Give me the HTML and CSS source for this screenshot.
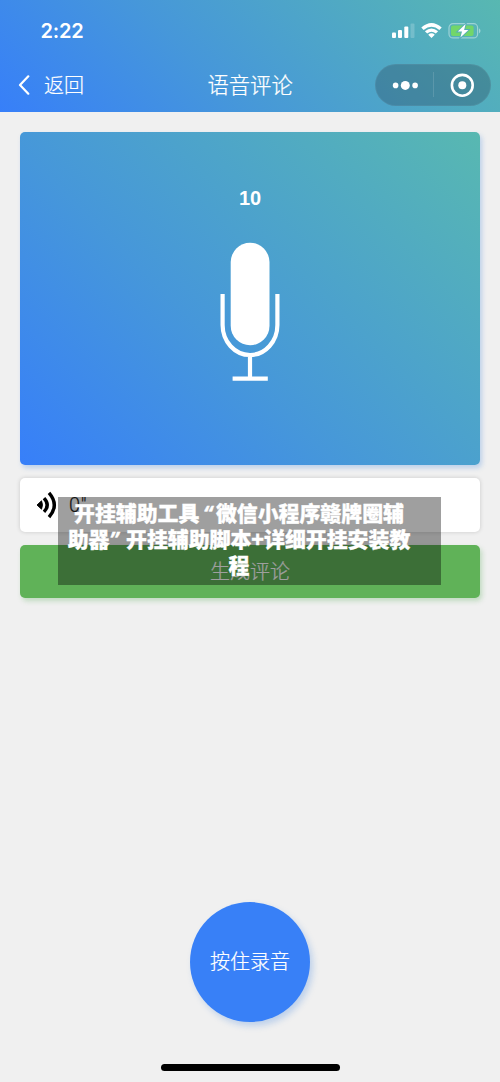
FILE: index.html
```
<!DOCTYPE html>
<html lang="zh-CN">
<head>
<meta charset="utf-8">
<title>语音评论</title>
<link rel="stylesheet" href="styles.css">
</head>
<body>
<div class="screen">
  <header class="header">
    <div class="status">
      <span class="time">2:22</span>
      <svg class="status-icons" width="92" height="18" viewBox="0 0 92 18">
        <g fill="#fff">
          <rect x="2" y="10.4" width="4" height="5.6" rx="1"/>
          <rect x="8" y="8" width="4" height="8" rx="1"/>
          <rect x="14.3" y="4.6" width="4" height="11.4" rx="1"/>
          <rect x="20.5" y="1.6" width="4" height="14.4" rx="1" opacity=".2"/>
          <path d="M31.3 5.6Q41.5-3.4 51.7 5.6L49.4 8Q41.5 1.4 33.6 8ZM34.9 9.3Q41.5 3.5 48.1 9.3L45.8 11.6Q41.5 7.8 37.2 11.6ZM38.2 12.7Q41.5 10 44.8 12.7L41.5 16Z"/>
        </g>
        <rect x="59" y="1.7" width="28.6" height="14.2" rx="4" fill="none" stroke="#fff" stroke-opacity=".42" stroke-width="1.2"/>
        <rect x="61" y="3.6" width="22.6" height="10.4" rx="2" fill="#72d66a"/>
        <path d="M89 6.2Q92 8.8 89 11.4Z" fill="#fff" opacity=".45"/>
        <path d="M75.6 2.1L67.8 9.5H72L70.4 15.6L78.4 7.9H74.1Z" fill="#fff" stroke="#55adb8" stroke-width="1.8" paint-order="stroke"/>
      </svg>
    </div>
    <nav class="navbar">
      <div class="back">
        <svg width="12" height="20" viewBox="0 0 12 20"><path d="M10.3 1.3L2 10L10.3 18.7" fill="none" stroke="#fff" stroke-width="2.2" stroke-linecap="round" stroke-linejoin="round"/></svg>
        <span class="back-label">返回</span>
      </div>
      <h1 class="title">语音评论</h1>
      <div class="capsule">
        <svg width="116" height="42" viewBox="0 0 116 42">
          <g fill="#fff">
            <circle cx="20.6" cy="21.4" r="2.8"/><circle cx="30.3" cy="21.4" r="4.5"/><circle cx="40.1" cy="21.4" r="2.8"/>
            <rect x="58" y="8" width="1" height="25" opacity=".13"/>
            <circle cx="87.3" cy="21.3" r="4"/>
          </g>
          <circle cx="87.3" cy="21.3" r="10.4" fill="none" stroke="#fff" stroke-width="2.6"/>
        </svg>
      </div>
    </nav>
  </header>
  <main class="content">
    <section class="recorder">
      <div class="count">10</div>
      <svg class="mic" width="60" height="140" viewBox="0 0 60 140">
        <rect x="10.7" y=".7" width="38.8" height="102.5" rx="19.4" fill="#fff"/>
        <path d="M2.6 52V83A27.4 30 0 0 0 57.4 83V52M30 113V136M12.6 136.7H47.8" fill="none" stroke="#fff" stroke-width="4.2"/>
      </svg>
    </section>
    <section class="voice">
      <svg width="22" height="28" viewBox="0 0 22 28">
        <path d="M1 14L5.5 9.8Q7.4 14 5.5 18.2Z" stroke="#000" stroke-width=".9"/>
        <path d="M8 7.2Q14.4 14 8 20.8M13 1.8Q23.6 14 13 26.2" fill="none" stroke="#000" stroke-width="3.4"/>
      </svg>
      <span class="duration">0"</span>
    </section>
    <div class="generate">生成评论</div>
    <div class="caption">
      <div>开挂辅助工具<span class="quote">“</span>微信小程序赣牌圈辅</div>
      <div>助器<span class="quote close">”</span>开挂辅助脚本+详细开挂安装教</div>
      <div>程</div>
    </div>
  </main>
  <footer class="footer">
    <div class="record">按住录音</div>
    <div class="home"></div>
  </footer>
</div>
</body>
</html>
```
FILE: styles.css
```
* { box-sizing: border-box; }
body {
  margin: 0;
  background: #f0f0f0;
  font-family: "Noto Sans CJK SC", sans-serif;
  font-weight: 300;
}
.screen {
  width: 500px;
  height: 1082px;
  display: flex;
  flex-direction: column;
  overflow: hidden;
}
.header {
  height: 112px;
  color: #fff;
  background: linear-gradient(45deg, #377ff9, #4697da 40%, #58b8b1);
}
.status {
  height: 64px;
  padding: 22px 18px 0 40.6px;
  display: flex;
  justify-content: space-between;
  align-items: flex-start;
}
.time {
  font: 600 20px/18px Inter, sans-serif;
  letter-spacing: -.2px;
}
.navbar {
  height: 42px;
  padding: 0 9px 0 18px;
  display: grid;
  grid-template-columns: 1fr 86px 1fr;
  align-items: center;
}
.back {
  display: flex;
  align-items: center;
  gap: 14px;
  font-size: 20px;
}
.back-label {
  line-height: 40px;
  -webkit-text-stroke: .2px currentColor;
}
.title {
  margin: -3px 0 0 -4px;
  font-size: 21.3px;
  font-weight: 300;
  line-height: 39px;
  white-space: nowrap;
  -webkit-text-stroke: .25px currentColor;
}
.capsule {
  justify-self: end;
  width: 116px;
  height: 42px;
  border-radius: 21px;
  background: rgba(40, 70, 90, .34);
  border: 1px solid rgba(255, 255, 255, .05);
}
.capsule svg { display: block; margin: -1px; }
.content {
  position: relative;
  padding: 20px 20px 0;
  display: flex;
  flex-direction: column;
}
.recorder {
  height: 333px;
  padding-top: 53px;
  border-radius: 5px;
  background: linear-gradient(45deg, #377ff9, #4697da 40%, #58b8b1);
  box-shadow: 2px 3px 5px rgba(55, 127, 220, .28);
  display: flex;
  flex-direction: column;
  align-items: center;
  color: #fff;
}
.count {
  font: bold 20px/26px "Liberation Sans", sans-serif;
  margin-bottom: 31px;
}
.voice {
  height: 54px;
  margin-top: 13px;
  padding-left: 16px;
  display: flex;
  align-items: center;
  gap: 11px;
  border-radius: 5px;
  background: #fff;
  box-shadow: 0 0 4px rgba(0, 0, 0, .17);
  color: #222;
}
.duration {
  font: 300 20px/26px Roboto, sans-serif;
  letter-spacing: .6px;
  -webkit-text-stroke: .2px currentColor;
}
.generate {
  height: 53px;
  margin-top: 13px;
  border-radius: 5px;
  background: #60b258;
  box-shadow: 2px 3px 5px rgba(80, 170, 80, .3);
  color: #fff;
  font-size: 20px;
  line-height: 51px;
  text-align: center;
  -webkit-text-stroke: .2px currentColor;
}
.caption {
  position: absolute;
  left: 58px;
  top: 385px;
  width: 383px;
  height: 88px;
  padding: 2px 21px 0 0;
  background: rgba(0, 0, 0, .375);
  color: #fff;
  font-size: 20.9px;
  font-weight: 900;
  line-height: 26px;
  text-align: center;
  white-space: nowrap;
  -webkit-text-stroke: .3px currentColor;
}
.quote {
  display: inline-block;
  width: 16.5px;
  font-family: "Open Sans", sans-serif;
  font-style: italic;
  font-weight: 700;
  line-height: 20px;
  text-align: center;
}
.close {
  text-align: left;
}
.footer {
  margin-top: auto;
  height: 180px;
  display: flex;
  flex-direction: column;
  align-items: center;
}
.record {
  width: 120px;
  height: 120px;
  border-radius: 50%;
  background: #3880f7;
  box-shadow: 3px 4px 6px rgba(55, 127, 220, .27);
  color: #fff;
  font-size: 20px;
  line-height: 118px;
  text-align: center;
  -webkit-text-stroke: .2px currentColor;
}
.home {
  width: 179px;
  height: 7px;
  margin-top: 42px;
  border-radius: 4px;
  background: #000;
}
```
